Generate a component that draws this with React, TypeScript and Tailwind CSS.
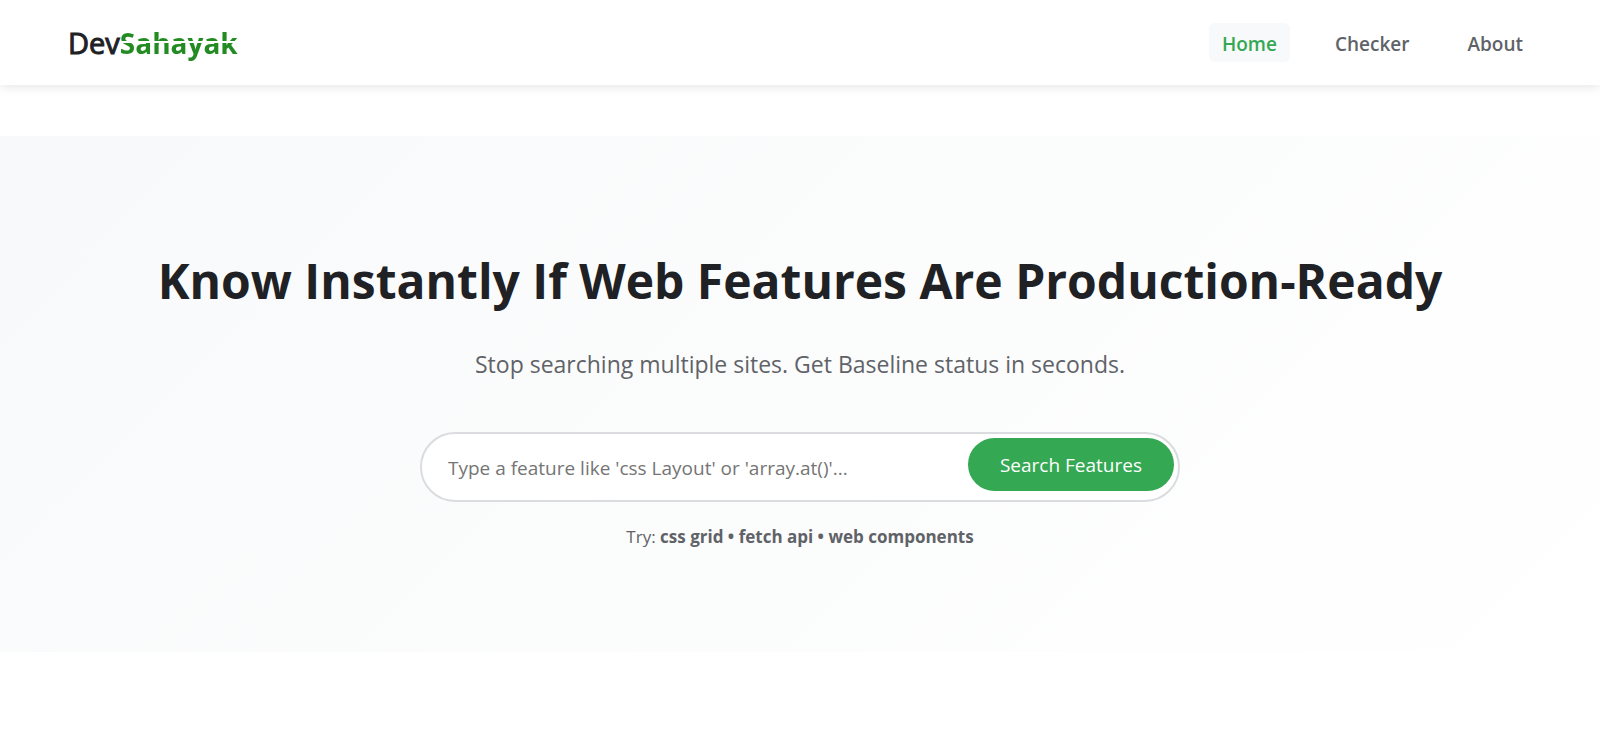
import { useState } from "react";

const links = ["Home", "Checker", "About"];
const suggestions = ["css grid", "fetch api", "web components"];

function Header() {
  return (
    <header className="relative bg-white shadow-[0_2px_10px_rgba(0,0,0,0.1)]">
      <div className="flex h-[85px] items-center justify-between px-16">
        <a href="#" className="flex items-center pl-1 text-[28px] leading-10">
          <span className="font-['Comic_Sans_MS','Open_Sans',sans-serif] text-[29px] font-medium text-[#202124] [-webkit-text-stroke:1px_#202124]">
            Dev
          </span>
          <span className="bg-[linear-gradient(#228b22_18px,transparent_18px,transparent_20px,#228b22_20px)] bg-clip-text font-bold text-transparent">
            Sahayak
          </span>
        </a>
        <nav className="flex items-center gap-8">
          {links.map((link) => (
            <a
              key={link}
              href="#"
              className={
                link === "Home"
                  ? "rounded-md bg-[#f8f9fa] px-[13px] pt-[7px] pb-1 text-[19px] leading-7 font-semibold text-[#34a853]"
                  : "rounded-md px-[13px] pt-[7px] pb-1 text-[19px] leading-7 font-semibold text-[#5f6368]"
              }
            >
              {link}
            </a>
          ))}
        </nav>
      </div>
    </header>
  );
}

function SearchBox() {
  const [query, setQuery] = useState("");

  return (
    <form
      className="mx-auto mt-12 flex h-[70px] w-full max-w-[760px] items-start rounded-full border-2 border-[#dadce0] bg-white py-1 pr-1 pl-[26px]"
      onSubmit={(e) => e.preventDefault()}
    >
      <input
        type="text"
        value={query}
        onChange={(e) => setQuery(e.target.value)}
        aria-label="Search features"
        placeholder="Type a feature like 'css Layout' or 'array.at()'..."
        className="h-[60px] min-w-0 flex-1 bg-transparent text-[19px] text-[#202124] outline-none placeholder:text-[#757575]"
      />
      <button
        type="submit"
        className="h-[53px] cursor-pointer rounded-full bg-[#34a853] px-8 pt-0.5 text-[19px] text-white"
      >
        Search Features
      </button>
    </form>
  );
}

export default function App() {
  return (
    <div className="min-h-screen bg-white font-['Segoe_UI','Open_Sans',sans-serif]">
      <Header />
      <main className="pt-[51px]">
        <section className="bg-linear-135 from-[#f8f9fa] to-white px-6 pt-[105px] pb-[101px] text-center">
          <h1 className="text-5xl leading-20 font-bold text-[#202124]">
            Know Instantly If Web Features Are Production-Ready
          </h1>
          <p className="mt-[23px] text-[23px] leading-10 text-[#5f6368]">
            Stop searching multiple sites. Get Baseline status in seconds.
          </p>
          <SearchBox />
          <p className="mt-[21px] text-[17px] leading-7 text-[#5f6368]">
            Try: <strong>{suggestions.join(" • ")}</strong>
          </p>
        </section>
      </main>
    </div>
  );
}
